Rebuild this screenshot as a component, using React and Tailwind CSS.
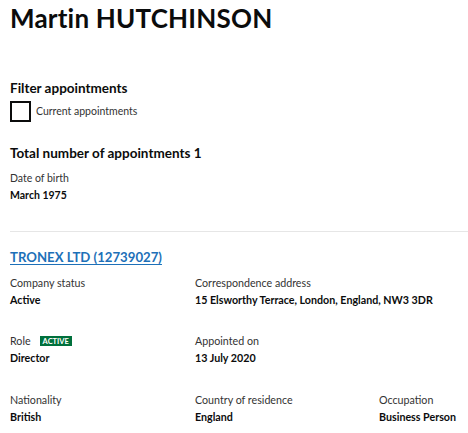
export default function App() {
  const font = { fontFamily: '"Lato", "Liberation Sans", sans-serif' };
  return (
    <div className="w-[468px] h-[433px] overflow-hidden bg-white text-[#0b0c0c] pl-[10px]" style={font}>
      <h1 className="text-[26px] leading-[30px] font-bold pt-[3px] tracking-[0.2px]">Martin HUTCHINSON</h1>
      <h2 className="mt-[47px] text-[13.5px] leading-[16px] font-bold">Filter appointments</h2>
      <label className="mt-[5px] flex items-center gap-[5px]">
        <span className="w-[21px] h-[21px] border-2 border-[#0b0c0c] bg-white"></span>
        <span className="text-[10.5px] text-[#333]">Current appointments</span>
      </label>
      <h2 className="mt-[23px] text-[13.5px] leading-[16px] font-bold">Total number of appointments 1</h2>
      <div className="mt-[10px] text-[10.5px] leading-[14px] text-[#333]">Date of birth</div>
      <div className="mt-[3px] text-[10.5px] leading-[14px] font-bold">March 1975</div>
      <div className="mt-[29px] border-t border-[#e6e6e6]"></div>
      <a href="#" className="block mt-[17px] text-[13.2px] leading-[16px] font-bold text-[#1d70b8] underline underline-offset-2">TRONEX LTD (12739027)</a>
      <div className="grid grid-cols-[185px_184px_1fr] mt-[11px] text-[10.7px] leading-[14px]">
        <div>
          <div className="text-[#333]">Company status</div>
          <div className="mt-[3px] font-bold">Active</div>
        </div>
        <div className="col-span-2">
          <div className="text-[#333]">Correspondence address</div>
          <div className="mt-[3px] font-bold">15 Elsworthy Terrace, London, England, NW3 3DR</div>
        </div>
        <div className="mt-[27px]">
          <div className="text-[#333] flex items-center gap-[9px]">
            Role
            <span className="bg-[#00703c] text-white text-[7.5px] leading-[9px] font-bold px-[3px] py-[0.5px]">ACTIVE</span>
          </div>
          <div className="mt-[3px] font-bold">Director</div>
        </div>
        <div className="mt-[27px] col-span-2">
          <div className="text-[#333]">Appointed on</div>
          <div className="mt-[3px] font-bold">13 July 2020</div>
        </div>
        <div className="mt-[28px]">
          <div className="text-[#333]">Nationality</div>
          <div className="mt-[3px] font-bold">British</div>
        </div>
        <div className="mt-[28px]">
          <div className="text-[#333]">Country of residence</div>
          <div className="mt-[3px] font-bold">England</div>
        </div>
        <div className="mt-[28px]">
          <div className="text-[#333]">Occupation</div>
          <div className="mt-[3px] font-bold">Business Person</div>
        </div>
      </div>
    </div>
  );
}
